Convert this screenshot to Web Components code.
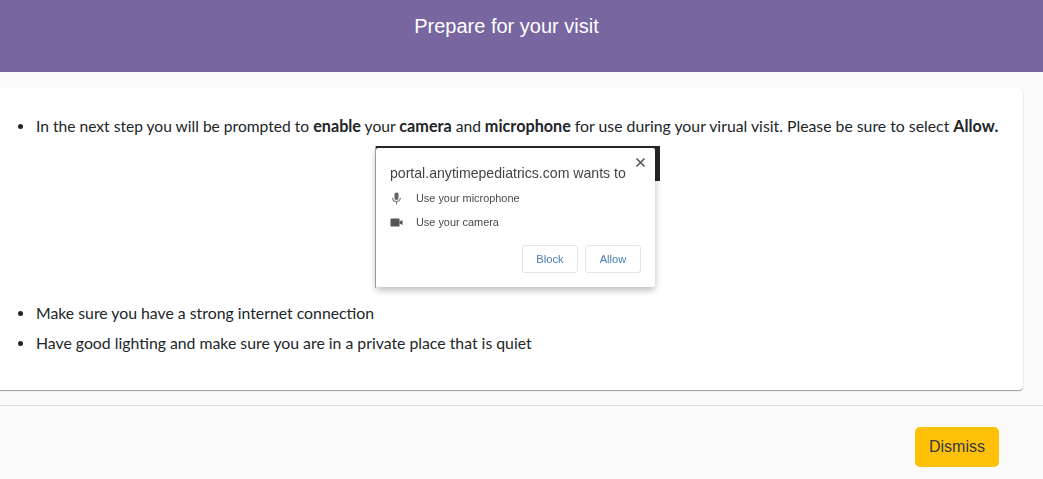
<!DOCTYPE html>
<html>
<head>
<meta charset="utf-8">
<title>Prepare for your visit</title>
<style>
  html, body { margin: 0; height: 100%; background: #fafafa; overflow: hidden; }
  .lead { font-size: 15.6px; }
  .lead b { font-size: 16.2px; }
  .lead span { font-size: 15.8px; }
</style>
</head>
<body>
<visit-page>
  <visit-header slot="header">Prepare for your visit</visit-header>
  <visit-card>
    <ul-item><span class="lead">In the next step you will be prompted to <b>enable</b> your <b>camera</b> and <b>microphone</b> <span>for use during your virual visit. Please be sure to select</span> <b>Allow.</b></span></ul-item>
    <permission-shot></permission-shot>
    <ul-item>Make sure you have a strong internet connection</ul-item>
    <ul-item>Have good lighting and make sure you are in a private place that is quiet</ul-item>
  </visit-card>
  <visit-footer slot="footer"><dismiss-button>Dismiss</dismiss-button></visit-footer>
</visit-page>

<script>
/**
 * Page frame: header, content and footer
 */
class VisitPage extends HTMLElement {
    constructor() {
        super();
        this.attachShadow({ mode: 'open' });
    }

    connectedCallback() {
        this.shadowRoot.innerHTML = `
      <style>
        :host {
          display: flex;
          flex-direction: column;
          height: 479px;
          font-family: Lato, sans-serif;
          color: #212529;
        }
        .content {
          padding: 16px 20px 15px 0;
        }
      </style>
      <slot name="header"></slot>
      <div class="content"><slot></slot></div>
      <slot name="footer"></slot>
    `;
    }
}

class VisitHeader extends HTMLElement {
    constructor() {
        super();
        this.attachShadow({ mode: 'open' });
    }

    connectedCallback() {
        this.shadowRoot.innerHTML = `
      <style>
        :host {
          display: block;
          box-sizing: border-box;
          height: 72px;
          padding: 14px 30px 0 0;
          background-color: #77669f;
          color: #fff;
          text-align: center;
          font: 20px/24px "Liberation Sans", Arial, sans-serif;
        }
      </style>
      <slot></slot>
    `;
    }
}

class VisitCard extends HTMLElement {
    constructor() {
        super();
        this.attachShadow({ mode: 'open' });
    }

    connectedCallback() {
        this.shadowRoot.innerHTML = `
      <style>
        :host {
          display: block;
          box-sizing: border-box;
          height: 302px;
          padding: 23px 0 0 36px;
          background: #fff;
          border-radius: 0 4px 4px 0;
          box-shadow: 0 1px 1px rgba(0,0,0,0.38), 0 0 2px rgba(0,0,0,0.06);
        }
      </style>
      <slot></slot>
    `;
    }
}

/**
 * One bullet line
 */
class UlItem extends HTMLElement {
    constructor() {
        super();
        this.attachShadow({ mode: 'open' });
    }

    connectedCallback() {
        this.shadowRoot.innerHTML = `
      <style>
        :host {
          display: block;
          position: relative;
          font-size: 15.8px;
          line-height: 30px;
          white-space: nowrap;
        }
        .dot {
          position: absolute;
          left: -18px;
          top: 13px;
          width: 5px;
          height: 5px;
          border-radius: 50%;
          background: #212529;
        }
      </style>
      <span class="dot"></span><slot></slot>
    `;
    }
}

/**
 * The browser permission prompt picture
 */
class PermissionShot extends HTMLElement {
    constructor() {
        super();
        this.attachShadow({ mode: 'open' });
    }

    connectedCallback() {
        this.shadowRoot.innerHTML = `
      <style>
        :host {
          display: block;
          box-sizing: border-box;
          width: 285px;
          height: 151px;
          margin: 5px 0 1px 339px;
          position: relative;
          font-family: "Liberation Sans", Arial, sans-serif;
          filter: blur(0.4px);
        }
        .bar {
          position: absolute;
          left: 0; top: 0;
          width: 285px;
          height: 35px;
          background: #26262a;
        }
        .side {
          position: absolute;
          left: 0; top: 0;
          width: 1px;
          height: 142px;
          background: #b0b0b0;
        }
        .box {
          position: absolute;
          left: 1px; top: 2px;
          width: 279px;
          height: 139px;
          box-sizing: border-box;
          padding: 17px 0 0 14px;
          background: #fff;
          border-radius: 2px;
          box-shadow: 0 3px 7px rgba(0,0,0,0.28);
        }
        .title { font-size: 14.1px; line-height: 16px; color: #444; white-space: nowrap; }
        .row {
          display: flex;
          align-items: center;
          height: 24px;
          font-size: 10.9px;
          color: #4a4a4a;
          white-space: nowrap;
        }
        .rows { margin-top: 5px; }
        .row svg { width: 13px; height: 13px; margin-right: 13px; flex: none; }
        .actions {
          display: flex;
          justify-content: flex-end;
          gap: 7px;
          margin: 11px 14px 0 0;
        }
        .btn {
          box-sizing: border-box;
          width: 56px;
          height: 28px;
          border: 1px solid #e2e4e8;
          border-radius: 3px;
          color: #4a7fb5;
          font-size: 11.2px;
          line-height: 26px;
          text-align: center;
        }
        .close {
          position: absolute;
          right: 9px;
          top: 9px;
          width: 11px;
          height: 11px;
        }
      </style>
      <div class="bar"></div>
      <div class="side"></div>
      <div class="box">
        <svg class="close" viewBox="0 0 11 11"><path d="M1.5 1.5l8 8M9.5 1.5l-8 8" stroke="#555" stroke-width="1.6" fill="none"/></svg>
        <div class="title">portal.anytimepediatrics.com wants to</div>
        <div class="rows">
          <div class="row">
            <svg viewBox="0 0 13 13"><rect x="4.4" y="0.5" width="4.2" height="7.5" rx="2" fill="#666"/><path d="M2.6 5.8c0 5 7.8 5 7.8 0M6.5 9.6v2.9" stroke="#777" stroke-width="1.1" fill="none"/></svg>
            Use your microphone
          </div>
          <div class="row">
            <svg viewBox="0 0 13 13"><rect x="0.5" y="2.5" width="9" height="8" rx="0.6" fill="#555"/><path d="M9.5 5.5l3-1.5v5l-3-1.5z" fill="#555"/></svg>
            Use your camera
          </div>
        </div>
        <div class="actions">
          <div class="btn">Block</div>
          <div class="btn">Allow</div>
        </div>
      </div>
    `;
    }
}

class VisitFooter extends HTMLElement {
    constructor() {
        super();
        this.attachShadow({ mode: 'open' });
    }

    connectedCallback() {
        this.shadowRoot.innerHTML = `
      <style>
        :host {
          display: flex;
          justify-content: flex-end;
          box-sizing: border-box;
          padding: 21px 44px 0 0;
          border-top: 1px solid #dedede;
          flex: 1;
        }
      </style>
      <slot></slot>
    `;
    }
}

class DismissButton extends HTMLElement {
    constructor() {
        super();
        this.attachShadow({ mode: 'open' });
    }

    connectedCallback() {
        this.shadowRoot.innerHTML = `
      <style>
        :host {
          display: block;
          box-sizing: border-box;
          width: 84px;
          height: 40px;
          background: #ffc107;
          border-radius: 5px;
          color: #343a40;
          text-align: center;
          font: 16px/40px "Liberation Sans", Arial, sans-serif;
        }
      </style>
      <slot></slot>
    `;
    }
}

customElements.define('visit-page', VisitPage);
customElements.define('visit-header', VisitHeader);
customElements.define('visit-card', VisitCard);
customElements.define('ul-item', UlItem);
customElements.define('permission-shot', PermissionShot);
customElements.define('visit-footer', VisitFooter);
customElements.define('dismiss-button', DismissButton);
</script>
</body>
</html>
